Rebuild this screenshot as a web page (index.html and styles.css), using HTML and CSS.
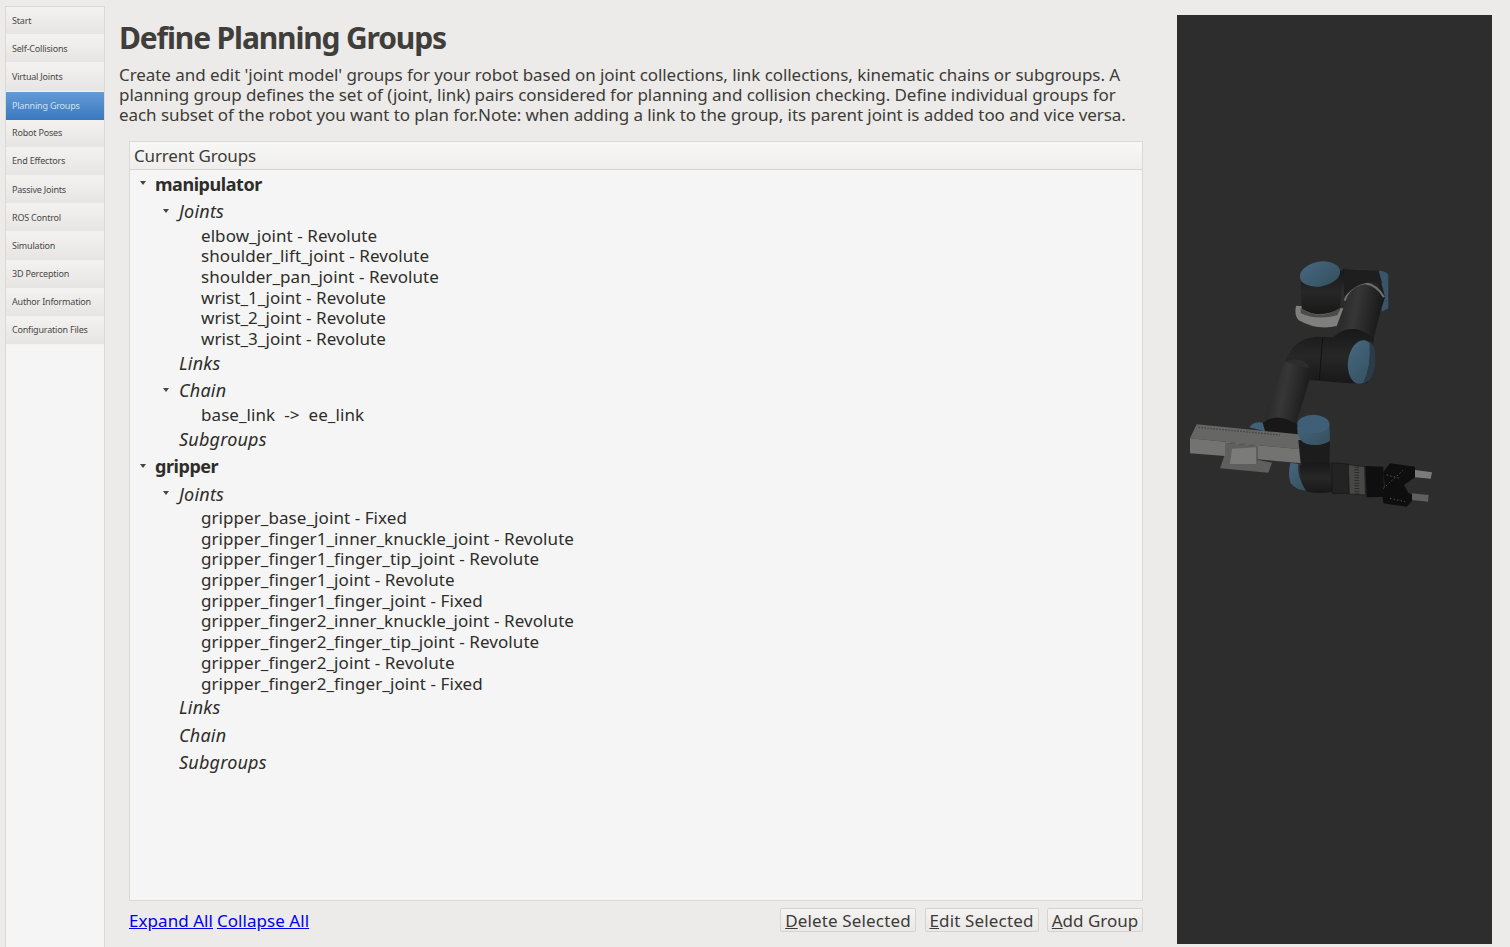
FILE: index.html

```html
<!DOCTYPE html>
<html lang="en">
<head>
  <meta charset="UTF-8">
  <title>Define Planning Groups</title>
  <link rel="stylesheet" href="styles.css">
</head>
<body>
  <nav class="sidebar">
    <a class="nav-item">Start</a>
    <a class="nav-item">Self-Collisions</a>
    <a class="nav-item">Virtual Joints</a>
    <a class="nav-item active">Planning Groups</a>
    <a class="nav-item">Robot Poses</a>
    <a class="nav-item">End Effectors</a>
    <a class="nav-item">Passive Joints</a>
    <a class="nav-item">ROS Control</a>
    <a class="nav-item">Simulation</a>
    <a class="nav-item">3D Perception</a>
    <a class="nav-item">Author Information</a>
    <a class="nav-item">Configuration Files</a>
  </nav>

  <main class="main">
    <h1>Define Planning Groups</h1>
    <p class="intro">Create and edit 'joint model' groups for your robot based on joint collections, link collections, kinematic chains or subgroups. A<br>planning group defines the set of (joint, link) pairs considered for planning and collision checking. Define individual groups for<br>each subset of the robot you want to plan for.Note: when adding a link to the group, its parent joint is added too and vice versa.</p>

    <section class="panel">
      <div class="panel-head">Current Groups</div>
      <div class="tree">
        <div class="row group"><i class="arrow"></i>manipulator</div>
        <div class="row section"><i class="arrow"></i>Joints</div>
        <div class="leaf">elbow_joint - Revolute</div>
        <div class="leaf">shoulder_lift_joint - Revolute</div>
        <div class="leaf">shoulder_pan_joint - Revolute</div>
        <div class="leaf">wrist_1_joint - Revolute</div>
        <div class="leaf">wrist_2_joint - Revolute</div>
        <div class="leaf">wrist_3_joint - Revolute</div>
        <div class="row section">Links</div>
        <div class="row section"><i class="arrow"></i>Chain</div>
        <div class="leaf">base_link &nbsp;-&gt; &nbsp;ee_link</div>
        <div class="row section">Subgroups</div>
        <div class="row group"><i class="arrow"></i>gripper</div>
        <div class="row section"><i class="arrow"></i>Joints</div>
        <div class="leaf">gripper_base_joint - Fixed</div>
        <div class="leaf">gripper_finger1_inner_knuckle_joint - Revolute</div>
        <div class="leaf">gripper_finger1_finger_tip_joint - Revolute</div>
        <div class="leaf">gripper_finger1_joint - Revolute</div>
        <div class="leaf">gripper_finger1_finger_joint - Fixed</div>
        <div class="leaf">gripper_finger2_inner_knuckle_joint - Revolute</div>
        <div class="leaf">gripper_finger2_finger_tip_joint - Revolute</div>
        <div class="leaf">gripper_finger2_joint - Revolute</div>
        <div class="leaf">gripper_finger2_finger_joint - Fixed</div>
        <div class="row section">Links</div>
        <div class="row section">Chain</div>
        <div class="row section">Subgroups</div>
      </div>
    </section>

    <div class="actions">
      <a class="link" href="#">Expand All</a>
      <a class="link" href="#">Collapse All</a>
      <div class="buttons">
        <button class="btn btn-delete"><u>D</u>elete Selected</button>
        <button class="btn btn-edit"><u>E</u>dit Selected</button>
        <button class="btn btn-add"><u>A</u>dd Group</button>
      </div>
    </div>
  </main>

  <div class="viewer">
    <svg class="robot" viewBox="0 0 840 840" width="280" height="280">
      <defs>
        <linearGradient id="armA" x1="0" y1="0" x2="1" y2="0.25">
          <stop offset="0" stop-color="#1f1f1f"/>
          <stop offset="0.5" stop-color="#373737"/>
          <stop offset="1" stop-color="#191919"/>
        </linearGradient>
        <linearGradient id="armB" x1="0" y1="0" x2="0" y2="1">
          <stop offset="0" stop-color="#181818"/>
          <stop offset="0.5" stop-color="#272727"/>
          <stop offset="1" stop-color="#181818"/>
        </linearGradient>
        <linearGradient id="cap" x1="0" y1="0" x2="1" y2="1">
          <stop offset="0" stop-color="#47677f"/>
          <stop offset="1" stop-color="#34505f"/>
        </linearGradient>
      </defs>

      <!-- upper link -->
      <path d="M622 92 Q650 92 655 105 L655 205 L635 215 Z" fill="#3a5468"/>
      <path d="M520 85 L625 92 L645 172 L632 212 L610 298 L500 292 L522 175 Z" fill="url(#armA)"/>
      <path d="M524 182 Q540 135 585 130 Q622 135 642 172" fill="none" stroke="#6f6f6d" stroke-width="6"/>
      <path d="M516 88 L626 92 L636 130 Q570 115 524 170 Z" fill="#1e1e1e"/>

      <!-- base flange -->
      <path d="M378 197 Q372 224 385 240 Q440 272 500 258 L520 205 Z" fill="#7f7f7d"/>
      <path d="M392 205 Q450 245 514 202 L502 226 Q440 242 392 220 Z" fill="#4c4c4a"/>

      <!-- base cylinder -->
      <path d="M392 128 L395 206 Q450 240 510 205 L522 90 Z" fill="url(#armB)"/>
      <ellipse cx="450" cy="102" rx="61" ry="37" transform="rotate(-10 450 102)" fill="url(#cap)"/>

      <!-- lower arm -->
      <path d="M345 365 L428 388 L378 552 L282 535 Z" fill="url(#armA)"/>

      <!-- shoulder -->
      <path d="M345 365 Q370 295 440 290 L490 292 Q520 262 560 268 Q590 275 612 298 L592 430 L535 430 L420 420 Q430 385 405 365 Q375 350 345 365 Z" fill="url(#armB)"/>
      <path d="M458 292 L448 420" stroke="#101010" stroke-width="3"/>
      <ellipse cx="574" cy="366" rx="40" ry="66" transform="rotate(8 574 366)" fill="url(#cap)"/>
      <path d="M598 303 Q622 320 614 385 Q606 425 578 432 Q605 380 598 303 Z" fill="#2a3c48"/>

      <!-- forearm joint -->
      <path d="M238 562 Q250 542 282 548 L290 575 Z" fill="#40617a"/>
      <path d="M278 548 Q320 515 380 552 L385 600 L290 590 Z" fill="#181818"/>

      <!-- camera bracket -->
      <path d="M166 640 L150 685 L295 698 L306 668 Z" fill="#5f5f5d"/>
      <path d="M80 553 L408 585 L393 628 L60 595 Z" fill="#666664"/>
      <path d="M60 595 L393 628 L395 670 L262 658 L262 618 L165 608 L165 648 L60 640 Z" fill="#737371"/>
      <path d="M165 608 L262 618 L262 680 L165 672 Z" fill="#5f5f5d"/>
      <path d="M186 626 L258 622 L258 672 L180 672 Z" fill="#7b7b79"/>
      <path d="M408 585 L393 628 L395 670 L405 640 Z" fill="#4a4a48"/>
      <path d="M85 562 L330 585" stroke="#474746" stroke-width="4" stroke-dasharray="5 4"/>

      <!-- wrist -->
      <path d="M385 600 L480 605 L478 672 L405 690 L392 670 Z" fill="#1c1c1c"/>
      <path d="M382 560 Q380 600 410 612 Q450 622 480 602 L478 550 Q430 510 382 560 Z" fill="url(#cap)"/>
      <ellipse cx="430" cy="552" rx="48" ry="28" fill="#3f5f78"/>
      <path d="M388 680 Q400 665 480 668 L492 755 Q430 765 400 750 Z" fill="url(#armB)"/>
      <path d="M362 668 Q352 700 362 730 Q380 752 408 752 Q380 710 385 672 Z" fill="url(#cap)"/>

      <!-- tool -->
      <path d="M485 668 L535 672 L538 760 L487 760 Z" fill="#232323" stroke="#141414" stroke-width="2"/>
      <path d="M535 674 L584 680 L586 765 L538 762 Z" fill="#484846" stroke="#1a1a1a" stroke-width="2"/>
      <path d="M560 680 L561 762" stroke="#2a2a2a" stroke-width="14" stroke-dasharray="3 5"/>
      <path d="M586 678 L640 680 L642 770 L590 772 Z" fill="#0f0f0f"/>

      <!-- gripper -->
      <path d="M735 690 L786 697 L782 716 L735 712 Z" fill="#7b7b79"/>
      <path d="M725 760 L776 765 L774 785 L725 780 Z" fill="#5f5f5d"/>
      <path d="M640 695 L660 670 L735 680 L735 712 L702 735 L716 760 L726 762 L726 782 L710 800 L640 790 L636 760 L645 740 Z" fill="#0e0e0e"/>
      <path d="M650 705 L690 715 M640 745 L700 690 M660 775 L705 785" stroke="#5a5a58" stroke-width="3" stroke-dasharray="4 7"/>
    </svg>
  </div>
</body>
</html>
```

FILE: styles.css

```css
body {
  margin: 0;
  height: 947px;
  overflow: hidden;
  display: flex;
  background-color: #ecebe9;
  color: #3c3b37;
  font-family: "Noto Sans", sans-serif;
}

.sidebar {
  width: 98px;
  margin: 6px 0 0 5px;
  background-color: #f5f5f5;
  border: 1px solid #dcd8d3;
  border-bottom: none;
  display: flex;
  flex-direction: column;
}

.nav-item {
  height: 28.18px;
  box-sizing: border-box;
  padding: 0 0 1px 6px;
  display: flex;
  align-items: center;
  font-size: 9px;
  letter-spacing: -0.2px;
  color: #4a4945;
  background: linear-gradient(#f3f2f1, #e6e5e4);
  border-bottom: 1px solid #f2f1f0;
}

.nav-item.active {
  color: #d0e0f2;
  background: linear-gradient(#639bd6, #3a78bf);
  border-bottom: none;
}

.main {
  width: 1024px;
  padding: 0 0 0 14px;
  display: flex;
  flex-direction: column;
}

h1 {
  margin: 19px 0 0;
  height: 38px;
  line-height: 38px;
  font-size: 30px;
  font-weight: 700;
  letter-spacing: -1.15px;
  color: #3f3e3b;
}

.intro {
  margin: 8px 0 0;
  font-size: 17px;
  line-height: 20px;
  letter-spacing: -0.065px;
  white-space: nowrap;
}

.panel {
  width: 1012px;
  height: 758px;
  margin: 16px 0 0 10px;
  background-color: #f5f5f5;
  border: 1px solid #dcd8d3;
}

.panel-head {
  height: 27px;
  line-height: 27px;
  padding-left: 4px;
  font-size: 17px;
  letter-spacing: -0.15px;
  background: linear-gradient(#f7f7f6, #efeeed);
  border-bottom: 1px solid #d8d5d0;
}

.tree {
  padding-top: 0.7px;
  color: #2e2d2a;
  font-size: 17px;
}

.row {
  height: 27.5px;
  line-height: 27.5px;
  position: relative;
}

.group {
  padding-left: 25px;
  font-size: 18px;
  font-weight: 700;
  letter-spacing: -0.45px;
}

.section {
  padding-left: 49px;
  font-style: italic;
  font-size: 18px;
  letter-spacing: 0.2px;
}

.leaf {
  height: 20.7px;
  line-height: 20.7px;
  padding-left: 71px;
  letter-spacing: 0.07px;
}

.arrow {
  position: absolute;
  top: 10.5px;
  left: 10px;
  border-left: 3px solid transparent;
  border-right: 3px solid transparent;
  border-top: 4px solid #45443f;
}

.section .arrow {
  left: 33px;
}

.actions {
  margin: 7px 0 0 10px;
  width: 1014px;
  height: 24px;
  display: flex;
  align-items: center;
  gap: 4px;
}

.link {
  font-size: 17px;
  letter-spacing: 0.05px;
  color: #0000ee;
}

.buttons {
  margin-left: auto;
  display: flex;
  gap: 8.5px;
}

.btn {
  height: 24px;
  padding: 0;
  font: 17px "Noto Sans", sans-serif;
  letter-spacing: 0.15px;
  color: #3c3b37;
  background: linear-gradient(#f4f3f2, #e9e8e7);
  border: 1px solid #d6d3ce;
  border-radius: 2px;
}

.btn-delete { width: 136px; }
.btn-edit { width: 114px; }
.btn-add { width: 96px; letter-spacing: 0; }

.viewer {
  width: 315px;
  height: 929px;
  margin: 15px 0 0 34px;
  background-color: #2d2d2d;
  position: relative;
}

.robot {
  position: absolute;
  top: 225px;
  left: -7px;
  filter: blur(0.5px);
}
```
